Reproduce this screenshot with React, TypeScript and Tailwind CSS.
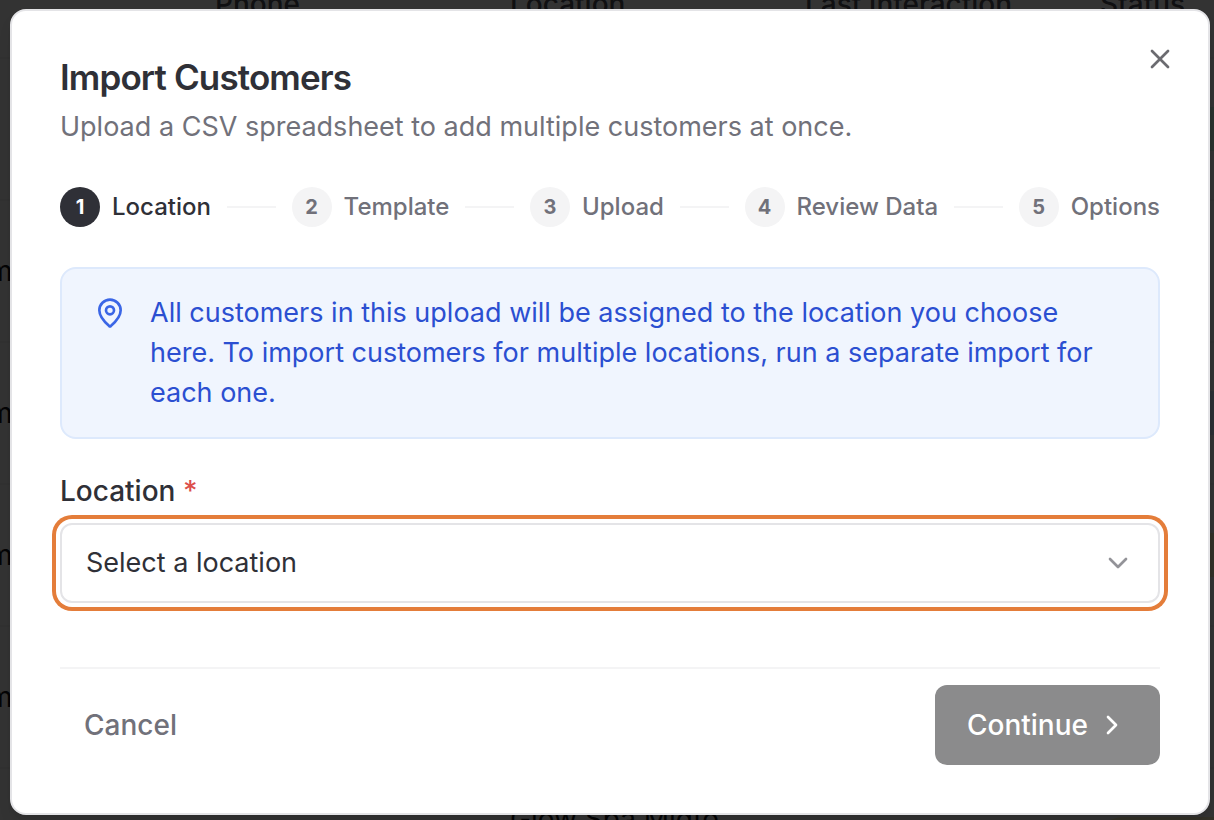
import { Fragment } from "react";
import { ChevronDown, ChevronRight, MapPin, X } from "lucide-react";

const steps = ["Location", "Template", "Upload", "Review Data", "Options"];

const columns = ["Phone", "Location", "Last Interaction", "Status"];

// Customer rows that sit under the dialog
const rows = [
  { email: "", location: "", badge: "bg-emerald-100" },
  { email: "m", location: "", badge: "" },
  { email: "m", location: "", badge: "bg-blue-100" },
  { email: "m", location: "", badge: "bg-amber-100" },
  { email: "m", location: "", badge: "" },
  { email: "", location: "Glow Spa Midto", badge: "bg-amber-100" },
];

function CustomerTable() {
  return (
    <div className="absolute inset-0 overflow-hidden bg-white" aria-hidden="true">
      <table className="-mt-[50px] w-[1379px] table-fixed border-collapse text-left text-[28px] leading-10 text-zinc-900">
        <thead>
          <tr className="h-[108px] border-b-2 border-zinc-100 text-zinc-600">
            <th className="w-[199px]" />
            {columns.map((column) => (
              <th key={column} className="px-4 font-medium whitespace-nowrap">
                {column}
              </th>
            ))}
          </tr>
        </thead>
        <tbody>
          {rows.map((row, i) => (
            <tr key={i} className="h-[142px] border-b-2 border-zinc-100">
              <td>
                <span className="-ml-3">{row.email}</span>
              </td>
              <td />
              <td className="px-4 pb-10 whitespace-nowrap">{row.location}</td>
              <td />
              <td className="px-4">
                {row.badge && <div className={`h-11 w-40 rounded-full ${row.badge}`} />}
              </td>
            </tr>
          ))}
        </tbody>
      </table>
    </div>
  );
}

function Stepper({ current }: { current: number }) {
  return (
    <ol className="mt-10 flex items-center gap-4">
      {steps.map((step, i) => (
        <Fragment key={step}>
          {i > 0 && <li aria-hidden="true" className="h-0.5 flex-1 bg-zinc-100" />}
          <li className="flex items-center gap-3">
            <span
              className={`flex size-10 items-center justify-center rounded-full text-xl font-bold ${
                i === current ? "bg-[#2f3037] text-white" : "bg-zinc-100 text-[#71717a]"
              }`}
            >
              {i + 1}
            </span>
            <span
              className={`text-2xl font-medium whitespace-nowrap ${
                i === current ? "text-[#2f3037]" : "text-[#71717a]"
              }`}
            >
              {step}
            </span>
          </li>
        </Fragment>
      ))}
    </ol>
  );
}

export default function App() {
  return (
    <div className="relative min-h-screen overflow-hidden font-['Inter',sans-serif]">
      <CustomerTable />
      <div className="absolute inset-0 bg-black/80" />

      <div className="relative pt-[9px] pr-1 pb-1 pl-[10px]">
        <div
          role="dialog"
          aria-labelledby="import-title"
          className="relative rounded-2xl border-2 border-zinc-200 bg-white p-12 text-[27px] leading-10 text-[#2f3037] shadow-lg"
        >
          <button type="button" aria-label="Close" className="absolute top-8 right-8 text-[#6b6b70]">
            <X className="size-8" strokeWidth={2} />
          </button>

          <h2 id="import-title" className="text-[35px] leading-9 font-semibold tracking-tight">
            Import Customers
          </h2>
          <p className="mt-3 text-[#71717a]">
            Upload a CSV spreadsheet to add multiple customers at once.
          </p>

          <Stepper current={0} />

          <div className="mt-10 flex gap-6 rounded-2xl border-2 border-[#dde9fc] bg-[#f0f5fe] px-8 py-6 text-[#2b4fd1]">
            <MapPin className="mt-1 size-8 shrink-0 text-[#3b66e6]" strokeWidth={2} />
            <p>
              All customers in this upload will be assigned to the location you choose here. To
              import customers for multiple locations, run a separate import for each one.
            </p>
          </div>

          <form>
            <label htmlFor="location" className="mt-8 block text-[28px] font-medium">
              Location <span className="text-[#dc4f4a]">*</span>
            </label>
            <div className="relative mt-3">
              <select
                id="location"
                className="block h-20 w-full appearance-none rounded-xl border-2 border-zinc-200 bg-white px-6 ring-4 ring-[#e47d3a] ring-offset-4 outline-none"
              >
                <option>Select a location</option>
              </select>
              <ChevronDown className="pointer-events-none absolute top-6 right-[26px] size-8 text-[#939398]" />
            </div>

            <div className="mt-16 flex items-center justify-between border-t-2 border-zinc-100 pt-4 text-[28px]">
              <button type="button" className="h-20 px-6 font-medium text-[#71717a]">
                Cancel
              </button>
              <button
                type="submit"
                disabled
                className="flex h-20 items-center gap-2 rounded-xl bg-[#8b8b8c] px-8 font-medium text-white"
              >
                Continue
                <ChevronRight className="size-8" />
              </button>
            </div>
          </form>
        </div>
      </div>
    </div>
  );
}
